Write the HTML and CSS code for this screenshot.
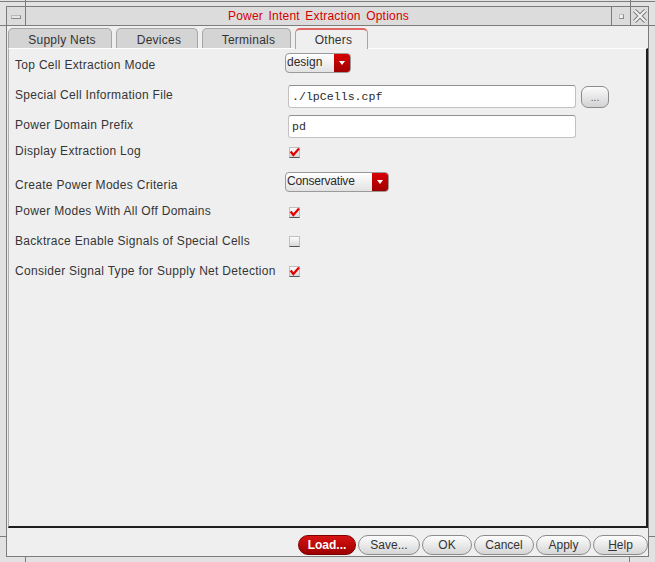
FILE: index.html
```html
<!DOCTYPE html>
<html>
<head>
<meta charset="utf-8">
<title>Power Intent Extraction Options</title>
<link rel="stylesheet" href="styles.css">
</head>
<body>
<div class="wm">
  <span class="tick tick-v tick-tl"></span>
  <span class="tick tick-v tick-tr"></span>
  <span class="tick tick-v tick-bl"></span>
  <span class="tick tick-v tick-br"></span>
  <span class="tick tick-h tick-lt"></span>
  <span class="tick tick-h tick-rt"></span>
  <span class="tick tick-h tick-lb"></span>
  <span class="tick tick-h tick-rb"></span>
  <div class="wm-inner">
    <div class="window">
      <div class="titlebar">
        <div class="tb-cell tb-menu"><span class="menu-glyph"></span></div>
        <div class="tb-title">Power Intent Extraction Options</div>
        <div class="tb-cell tb-min"><span class="min-glyph"></span></div>
        <div class="tb-cell tb-close">
          <svg class="close-icon" width="14" height="14" viewBox="0 0 14 14">
            <path d="M1.5 1.5 L12.5 12.5 M12.5 1.5 L1.5 12.5" stroke="#7a7a7a" stroke-width="4" fill="none"/>
            <path d="M1.5 1.5 L12.5 12.5 M12.5 1.5 L1.5 12.5" stroke="#f4f4f4" stroke-width="2" fill="none"/>
          </svg>
        </div>
      </div>
      <div class="client">
        <div class="tabs">
          <div class="tab tab-supply">Supply Nets</div>
          <div class="tab tab-devices">Devices</div>
          <div class="tab tab-terminals">Terminals</div>
          <div class="tab tab-others active">Others</div>
        </div>
        <div class="panel">
          <div class="form">
            <div class="label">Top Cell Extraction Mode</div>
            <div class="ctl"><div class="select select-design r1-ctl"><span class="select-text">design</span><span class="select-arrow"><span class="tri"></span></span></div></div>

            <div class="label">Special Cell Information File</div>
            <div class="ctl row-field r2-ctl"><div class="field">./lpCells.cpf</div><div class="browse">...</div></div>

            <div class="label r3-lbl">Power Domain Prefix</div>
            <div class="ctl r3-ctl"><div class="field">pd</div></div>

            <div class="label">Display Extraction Log</div>
            <div class="ctl"><span class="check on r4-ctl"><svg width="11" height="11" viewBox="0 0 11 11"><path d="M1.6 4.6 L4.4 8 L10 1.6" stroke="#e00000" stroke-width="2.3" fill="none"/></svg></span></div>

            <div class="label r5-lbl">Create Power Modes Criteria</div>
            <div class="ctl"><div class="select select-cons r5-ctl"><span class="select-text">Conservative</span><span class="select-arrow"><span class="tri"></span></span></div></div>

            <div class="label r6-lbl">Power Modes With All Off Domains</div>
            <div class="ctl"><span class="check on"><svg width="11" height="11" viewBox="0 0 11 11"><path d="M1.6 4.6 L4.4 8 L10 1.6" stroke="#e00000" stroke-width="2.3" fill="none"/></svg></span></div>

            <div class="label">Backtrace Enable Signals of Special Cells</div>
            <div class="ctl"><span class="check"></span></div>

            <div class="label">Consider Signal Type for Supply Net Detection</div>
            <div class="ctl"><span class="check on"><svg width="11" height="11" viewBox="0 0 11 11"><path d="M1.6 4.6 L4.4 8 L10 1.6" stroke="#e00000" stroke-width="2.3" fill="none"/></svg></span></div>
          </div>
        </div>
        <div class="buttons">
          <button class="btn btn-load">Load...</button>
          <button class="btn btn-save">Save...</button>
          <button class="btn btn-ok">OK</button>
          <button class="btn btn-cancel">Cancel</button>
          <button class="btn btn-apply">Apply</button>
          <button class="btn btn-help"><u>H</u>elp</button>
        </div>
      </div>
    </div>
  </div>
</div>
</body>
</html>
```

FILE: styles.css
```css
html, body {
  margin: 0;
  padding: 0;
}
body {
  width: 655px;
  height: 562px;
  overflow: hidden;
  background: #e2e2e2;
  font-family: "Liberation Sans", Arial, sans-serif;
  font-size: 12px;
  color: #333;
}
.wm {
  position: relative;
  width: 655px;
  height: 562px;
  box-sizing: border-box;
  padding-top: 1px;
  background: #e2e2e2;
}
.wm-inner {
  border-top: 1px solid #7c7c7c;
  padding: 4px 6px 0 6px;
}
.tick {
  position: absolute;
  background: #7c7c7c;
}
.tick-v { width: 1px; height: 6px; }
.tick-h { width: 6px; height: 1px; }
.tick-tl { left: 25px; top: 0; }
.tick-tr { left: 630px; top: 0; }
.tick-bl { left: 25px; top: 557px; height: 5px; }
.tick-br { left: 629px; top: 557px; height: 5px; }
.tick-lt { left: 0; top: 25px; }
.tick-rt { left: 649px; top: 25px; }
.tick-lb { left: 0; top: 536px; }
.tick-rb { left: 649px; top: 536px; }

.window {
  width: 643px;
  height: 551px;
  box-sizing: border-box;
  border: 1px solid #7c7c7c;
  display: flex;
  flex-direction: column;
}
.titlebar {
  height: 19px;
  box-sizing: border-box;
  border-bottom: 1px solid #7c7c7c;
  background: #dcdcdc;
  display: flex;
}
.tb-cell {
  display: flex;
  align-items: center;
  justify-content: center;
}
.tb-menu {
  width: 19px;
  box-sizing: border-box;
  border-right: 1px solid #7c7c7c;
}
.menu-glyph {
  width: 10px;
  height: 4px;
  box-sizing: border-box;
  border: 1px solid #8a8a8a;
  border-top-color: #b8b8b8;
  border-left-color: #b8b8b8;
  background: #e6e6e6;
  margin-top: 1px;
}
.tb-title {
  flex: 1;
  display: flex;
  align-items: center;
  justify-content: center;
  color: #d40000;
  font-size: 12px;
  letter-spacing: 0.2px;
  word-spacing: 2px;
}
.tb-min {
  width: 19px;
  box-sizing: border-box;
  border-left: 1px solid #7c7c7c;
}
.min-glyph {
  width: 5px;
  height: 5px;
  box-sizing: border-box;
  border: 1px solid #888;
  border-top-color: #c0c0c0;
  border-left-color: #c0c0c0;
  background: #f0f0f0;
  margin-top: 1px;
}
.tb-close {
  width: 18px;
  box-sizing: border-box;
  border-left: 1px solid #7c7c7c;
}
.close-icon {
  display: block;
  flex: none;
}

.client {
  flex: 1;
  background: #efefef;
  padding: 2px 0 0 1px;
  display: flex;
  flex-direction: column;
}
.tabs {
  display: flex;
  align-items: flex-start;
  gap: 4px;
  height: 20px;
}
.tab {
  height: 20px;
  box-sizing: border-box;
  border: 1px solid #a6a6a6;
  border-bottom: none;
  border-radius: 5px 5px 0 0;
  background: #d4d4d4;
  display: flex;
  align-items: center;
  justify-content: center;
  padding: 2px 0 0 4px;
  letter-spacing: 0.25px;
  color: #333;
}
.tab-supply { width: 104px; }
.tab-devices { width: 82px; }
.tab-terminals { width: 89px; }
.tab-others { width: 73px; }
.tab.active {
  height: 21px;
  margin-bottom: -1px;
  background: #efefef;
  border-top: 2px solid #e06666;
  position: relative;
  z-index: 1;
  padding-top: 1px;
}

.panel {
  height: 480px;
  box-sizing: border-box;
  border-top: 1px solid #ffffff;
  border-left: 1px solid #b0b0b0;
  border-right: 2px solid #1e1e1e;
  border-bottom: 2px solid #1e1e1e;
  padding: 1px 0 0 6px;
}
.form {
  display: grid;
  grid-template-columns: 273px 1fr;
  grid-template-rows: 30px 30px 28px 26px 34px 28px 30px 30px;
  align-items: center;
}
.label {
  line-height: 14px;
  letter-spacing: 0.3px;
  color: #353535;
  white-space: nowrap;
}
.ctl {
  display: flex;
  align-items: center;
}
.r3-lbl { margin-top: 2px; }
.r5-lbl { margin-top: 8px; }
.r6-lbl { margin-bottom: 2px; }
.r1-ctl { margin-bottom: 4px; }
.r2-ctl { margin-top: 3px; }
.r3-ctl { margin-top: 5px; }
.r4-ctl { margin-top: 2px; }
.r5-ctl { margin-top: 2px; }

.select {
  display: flex;
  height: 20px;
  box-sizing: border-box;
  margin-left: -3px;
  border: 1px solid #9a9a9a;
  border-radius: 4px;
  background: linear-gradient(#ffffff, #e2e2e2);
  overflow: hidden;
}
.select-design { width: 66px; }
.select-cons { width: 104px; }
.select-text {
  flex: 1;
  padding: 0 0 0 1px;
  line-height: 16px;
  font-size: 12px;
  color: #2a2a2a;
}
.select-cons .select-text { letter-spacing: -0.2px; }
.select-arrow {
  width: 16px;
  background: linear-gradient(#d80000, #a00000);
  display: flex;
  align-items: center;
  justify-content: center;
}
.tri {
  width: 0;
  height: 0;
  border-left: 3.5px solid transparent;
  border-right: 3.5px solid transparent;
  border-top: 4px solid #ffffff;
}

.field {
  width: 288px;
  height: 23px;
  box-sizing: border-box;
  border: 1px solid #c2c2c2;
  border-top-color: #909090;
  border-radius: 3px;
  background: #ffffff;
  padding-left: 3px;
  font-family: "Liberation Mono", "Courier New", monospace;
  font-size: 11.6px;
  line-height: 21px;
  color: #2a2a2a;
}
.browse {
  width: 28px;
  height: 22px;
  box-sizing: border-box;
  margin-left: 5px;
  border: 1px solid #8c8c8c;
  border-radius: 7px;
  background: linear-gradient(#fbfbfb, #d2d2d2);
  font-size: 10px;
  color: #555;
  display: flex;
  align-items: center;
  justify-content: center;
  padding-top: 2px;
}

.check {
  display: block;
  width: 11px;
  height: 11px;
  box-sizing: border-box;
  margin-left: 1px;
  border: 1px solid #c0c0c0;
  border-bottom: 1px solid #555;
  background: linear-gradient(#fdfdfd, #d8d8d8);
}
.check svg {
  display: block;
  margin: -1px 0 0 -1px;
}

.buttons {
  margin-top: 7px;
  height: 20px;
  display: flex;
  justify-content: flex-end;
  gap: 2px;
}
.btn {
  height: 20px;
  box-sizing: border-box;
  border: 1px solid #8c8c8c;
  border-radius: 10px;
  background: linear-gradient(#fdfdfd, #d6d6d6);
  font-family: "Liberation Sans", Arial, sans-serif;
  font-size: 12px;
  color: #333;
  padding: 0;
  margin: 0;
  line-height: 16px;
}
.btn u { text-decoration: underline; }
.btn-load {
  width: 58px;
  background: linear-gradient(#d81212, #9c0000);
  border-color: #7a0000;
  color: #ffffff;
  font-weight: bold;
}
.btn-save { width: 62px; }
.btn-ok { width: 50px; }
.btn-cancel { width: 60px; }
.btn-apply { width: 55px; }
.btn-help { width: 55px; }
```
